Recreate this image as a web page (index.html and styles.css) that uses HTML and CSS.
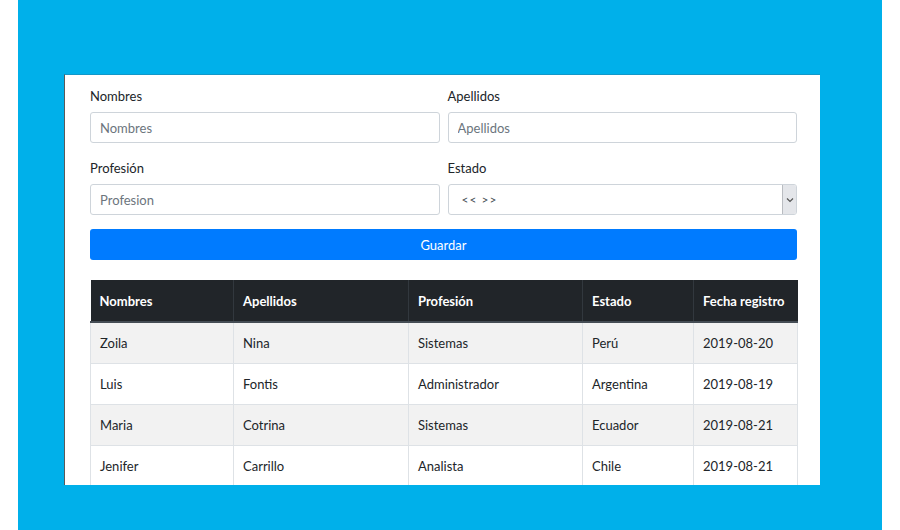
FILE: index.html
```html
<!DOCTYPE html>
<html lang="es">
<head>
<meta charset="utf-8">
<title>Registro</title>
<link rel="stylesheet" href="styles.css">
</head>
<body>
<div class="stage">
  <div class="card">
    <form class="form-grid">
      <div class="group">
        <label class="label">Nombres</label>
        <input class="input" type="text" placeholder="Nombres">
      </div>
      <div class="group">
        <label class="label">Apellidos</label>
        <input class="input" type="text" placeholder="Apellidos">
      </div>
      <div class="group">
        <label class="label">Profesión</label>
        <input class="input" type="text" placeholder="Profesion">
      </div>
      <div class="group">
        <label class="label">Estado</label>
        <div class="select">
          <span class="select-text">&lt;&lt; &gt;&gt;</span>
          <span class="select-btn">
            <svg width="8" height="6" viewBox="0 0 8 6"><path d="M1 1.5 L4 4.5 L7 1.5" fill="none" stroke="#555" stroke-width="1.2"/></svg>
          </span>
        </div>
      </div>
      <button class="btn" type="button">Guardar</button>
    </form>
    <table class="table">
      <thead>
        <tr><th class="c1">Nombres</th><th class="c2">Apellidos</th><th class="c3">Profesión</th><th class="c4">Estado</th><th class="c5">Fecha registro</th></tr>
      </thead>
      <tbody>
        <tr><td>Zoila</td><td>Nina</td><td>Sistemas</td><td>Perú</td><td>2019-08-20</td></tr>
        <tr><td>Luis</td><td>Fontis</td><td>Administrador</td><td>Argentina</td><td>2019-08-19</td></tr>
        <tr><td>Maria</td><td>Cotrina</td><td>Sistemas</td><td>Ecuador</td><td>2019-08-21</td></tr>
        <tr><td>Jenifer</td><td>Carrillo</td><td>Analista</td><td>Chile</td><td>2019-08-21</td></tr>
      </tbody>
    </table>
  </div>
</div>
</body>
</html>
```
FILE: styles.css
```css
* { box-sizing: border-box; }
html, body { margin: 0; padding: 0; background: #ffffff; }
body { font-family: Lato, "Liberation Sans", sans-serif; font-size: 13px; color: #212529; }
.stage {
  margin-left: 18px;
  width: 864px;
  height: 530px;
  background: #00b0ea;
  padding-top: 74px;
  padding-left: 46px;
  overflow: hidden;
}
.card {
  width: 756px;
  height: 411px;
  background: #ffffff;
  border-left: 1px solid #5a5a5a;
  border-top: 1px solid #1297c8;
  padding: 12px 23px 0 25px;
  overflow: hidden;
}
.form-grid {
  display: grid;
  grid-template-columns: 1fr 1fr;
  column-gap: 8px;
  margin: 0;
}
.group { display: flex; flex-direction: column; margin-bottom: 16px; }
.label { display: block; line-height: 18px; height: 18px; margin-bottom: 7px; color: #212529; }
.input {
  height: 31px;
  border: 1px solid #ced4da;
  border-radius: 3px;
  padding: 0 9px;
  font-family: inherit;
  font-size: 13px;
  color: #495057;
  background: #fff;
  outline: none;
}
.input::placeholder { color: #6c757d; opacity: 1; }
.select {
  height: 31px;
  border: 1px solid #ced4da;
  border-radius: 3px;
  display: flex;
  align-items: stretch;
  justify-content: space-between;
  background: #fff;
}
.select-text { display: flex; align-items: center; padding-left: 13px; font-size: 12px; color: #495057; letter-spacing: 1px; }
.select-btn {
  width: 14px;
  background: #e4e6ea;
  border-left: 1px solid #b9bcc1;
  border-radius: 0 2px 2px 0;
  display: flex;
  align-items: center;
  justify-content: center;
}
.btn {
  grid-column: 1 / 3;
  height: 31px;
  margin-top: -2px;
  border: none;
  border-radius: 3px;
  background: #007bff;
  color: #fff;
  font-family: inherit;
  font-size: 13px;
}
.table {
  width: 707px;
  margin-top: 20px;
  border-collapse: collapse;
  table-layout: fixed;
}
.table th, .table td {
  text-align: left;
  padding: 0 9px;
  white-space: nowrap;
}
.table th {
  height: 42px;
  background: #212529;
  color: #fff;
  font-weight: 700;
  border-left: 1px solid #32383e;
  border-bottom: 2px solid #454d55;
}
.table td {
  height: 41px;
  border-top: 1px solid #dee2e6;
  border-left: 1px solid #dee2e6;
  border-right: 1px solid #dee2e6;
}
.table th:first-child { border-left: none; }
.table tbody tr:first-child td { border-top: none; }
.table tbody tr:nth-child(odd) { background: #f2f2f2; }
.c1 { width: 143px; }
.c2 { width: 175px; }
.c3 { width: 174px; }
.c4 { width: 111px; }
.c5 { width: 104px; }
```
